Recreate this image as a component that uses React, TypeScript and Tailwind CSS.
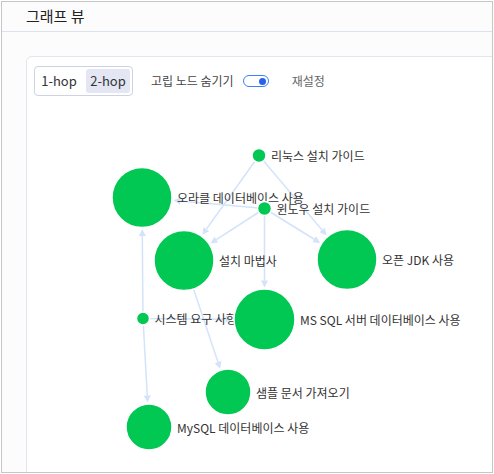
import React from 'react';

type GraphNode = { id: string; label: string; x: number; y: number; r: number };

// svg origin sits at page (27, 105)
const nodes: GraphNode[] = [
  { id: 'linux', label: '리눅스 설치 가이드', x: 232, y: 51.5, r: 7 },
  { id: 'oracle', label: '오라클 데이터베이스 사용', x: 115, y: 93.5, r: 30 },
  { id: 'windows', label: '윈도우 설치 가이드', x: 237.5, y: 104.5, r: 7 },
  { id: 'wizard', label: '설치 마법사', x: 157, y: 156.5, r: 30 },
  { id: 'jdk', label: '오픈 JDK 사용', x: 320, y: 155.5, r: 30 },
  { id: 'sysreq', label: '시스템 요구 사항', x: 116, y: 214.5, r: 6.5 },
  { id: 'mssql', label: 'MS SQL 서버 데이터베이스 사용', x: 237.5, y: 215.5, r: 30.5 },
  { id: 'sample', label: '샘플 문서 가져오기', x: 201, y: 288, r: 23 },
  { id: 'mysql', label: 'MySQL 데이터베이스 사용', x: 122, y: 323, r: 23 },
];

const edges: [string, string][] = [
  ['linux', 'wizard'],
  ['linux', 'jdk'],
  ['windows', 'wizard'],
  ['windows', 'jdk'],
  ['windows', 'mssql'],
  ['windows', 'oracle'],
  ['sysreq', 'oracle'],
  ['sysreq', 'mysql'],
  ['sysreq', 'mssql'],
  ['wizard', 'sample'],
];

const byId = Object.fromEntries(nodes.map((n) => [n.id, n]));

const EDGE = '#d3e3fb';

function Edge({ from, to }: { from: GraphNode; to: GraphNode }) {
  const dx = to.x - from.x;
  const dy = to.y - from.y;
  const len = Math.sqrt(dx * dx + dy * dy);
  const ux = dx / len;
  const uy = dy / len;
  // arrow tip stops at the target circle edge
  const tx = to.x - ux * (to.r + 1.5);
  const ty = to.y - uy * (to.r + 1.5);
  const bx = tx - ux * 7;
  const by = ty - uy * 7;
  const px = -uy * 3.5;
  const py = ux * 3.5;
  return (
    <g>
      <line x1={from.x} y1={from.y} x2={bx} y2={by} stroke={EDGE} strokeWidth={1.5} />
      <polygon points={`${tx},${ty} ${bx + px},${by + py} ${bx - px},${by - py}`} fill={EDGE} />
    </g>
  );
}

export default function App() {
  return (
    <div className="w-[494px] h-[474px] p-px bg-white font-['Noto_Sans_CJK_KR','Noto_Sans',sans-serif]">
      <div className="h-full flex flex-col border border-[#c6c6c6] bg-[#fcfcfd] overflow-hidden">
        {/* Header */}
        <div className="h-[30px] shrink-0 flex items-center px-6 border-b border-[#dde3ec] text-[15px] text-[#222]">
          그래프 뷰
        </div>

        {/* Body */}
        <div className="flex-1 pl-6 pt-6 overflow-hidden">
          <div className="w-[520px] h-[500px] border border-[#e1e6ef] rounded-tl-md bg-white">
            <div className="flex items-center px-[7px] pt-[9px]">
              <div className="flex h-[30px] p-[2px] gap-[5px] border border-[#cdd3e1] rounded-[4px] text-[13px] text-[#333]">
                <button className="w-[44px] h-full rounded-[3px] flex items-center justify-center">1-hop</button>
                <button className="w-[44px] h-full rounded-[3px] flex items-center justify-center bg-[#e4e6f4]">2-hop</button>
              </div>
              <span className="ml-[18px] text-[12px] text-[#444]">고립 노드 숨기기</span>
              <div className="ml-[9px] w-[26px] h-[12px] rounded-full border-[1.5px] border-[#3b82f6] flex items-center justify-end px-[2px]">
                <div className="w-[7px] h-[7px] rounded-full bg-[#2563eb]" />
              </div>
              <span className="ml-[23px] text-[12px] text-[#666]">재설정</span>
            </div>

            <svg width={466} height={370} className="block mt-2">
              {edges.map(([a, b]) => (
                <Edge key={`${a}-${b}`} from={byId[a]} to={byId[b]} />
              ))}
              {nodes.map((n) => (
                <g key={n.id}>
                  <circle cx={n.x} cy={n.y} r={n.r} fill="#00c853" stroke="#ffffff" strokeWidth={1.5} />
                  <text
                    x={n.x + n.r + 5}
                    y={n.y}
                    dominantBaseline="central"
                    fontSize={12}
                    fill="#333"
                  >
                    {n.label}
                  </text>
                </g>
              ))}
            </svg>
          </div>
        </div>
      </div>
    </div>
  );
}
